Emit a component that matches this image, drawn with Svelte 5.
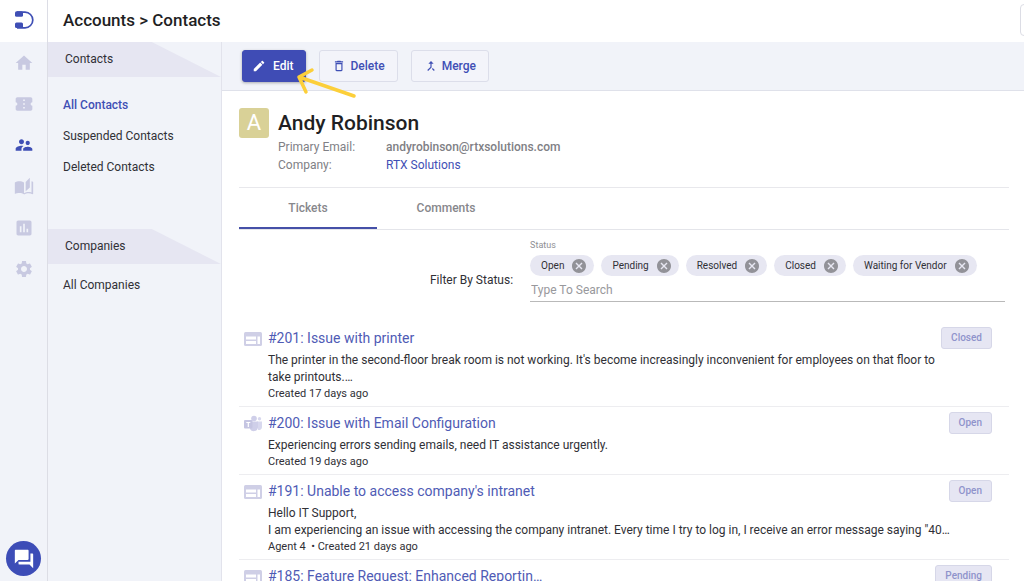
<script>
  const navItems = [
    { name: 'Home', paths: ['M10 20v-6h4v6h5v-8h3L12 3 2 12h3v8z'] },
    {
      name: 'Tickets',
      paths: [
        'M22 10V6c0-1.100-.9-2-2-2H4c-1.100 0-2 .9-2 2v4c1.100 0 2 .9 2 2s-.9 2-2 2v4c0 1.100.9 2 2 2h16c1.100 0 2-.9 2-2v-4c-1.100 0-2-.9-2-2s.9-2 2-2zm-9 7.500h-2v-2h2v2zm0-4.500h-2v-2h2v2zm0-4.500h-2v-2h2v2z'
      ]
    },
    {
      name: 'Accounts',
      active: true,
      paths: [
        'M16.500 12c1.380 0 2.490-1.120 2.490-2.500S17.880 7 16.500 7 14 8.120 14 9.500s1.120 2.500 2.500 2.500zM9 11c1.660 0 2.990-1.340 2.990-3S10.660 5 9 5 6 6.340 6 8s1.340 3 3 3zm7.500 3c-1.830 0-5.500.92-5.500 2.750V19h11v-2.250c0-1.830-3.670-2.750-5.500-2.750zM9 13c-2.330 0-7 1.170-7 3.500V19h7v-2.250c0-.85.33-2.340 2.370-3.470C10.500 13.100 9.660 13 9 13z'
      ]
    },
    {
      name: 'Knowledge base',
      paths: [
        'M12 6.500C10.500 5.400 8.500 5 6.500 5S2.500 5.400 1 6.500v14c1.500-.9 3.500-1.300 5.500-1.300s4 .4 5.500 1.500z',
        'M19 1l-5 5v11l5-4.500zM21 5v13.500c-1.100-.35-2.300-.5-3.500-.5-1.700 0-4.150.65-5.500 1.500v1.500c1.500-1 3.800-1.500 5.500-1.500 1.650 0 3.350.3 4.750 1.050.3.100.75-.15.75-.5V6c-.6-.45-1.250-.75-2-1z'
      ]
    },
    {
      name: 'Reports',
      paths: [
        'M19 3H5c-1.100 0-2 .9-2 2v14c0 1.100.9 2 2 2h14c1.100 0 2-.9 2-2V5c0-1.100-.9-2-2-2zM9 17H7v-7h2v7zm4 0h-2V7h2v10zm4 0h-2v-4h2v4z'
      ]
    },
    {
      name: 'Settings',
      paths: [
        'M19.140 12.940c.04-.3.060-.61.060-.94 0-.32-.02-.64-.07-.94l2.030-1.580c.18-.14.23-.41.120-.61l-1.920-3.320c-.12-.22-.37-.29-.59-.22l-2.390.96c-.5-.38-1.030-.7-1.620-.94l-.36-2.540c-.04-.24-.24-.41-.48-.41h-3.840c-.24 0-.43.170-.47.410l-.36 2.540c-.59.240-1.130.570-1.620.940l-2.390-.96c-.22-.08-.47 0-.59.220L2.740 8.870c-.12.210-.08.470.120.610l2.030 1.580c-.05.300-.09.630-.09.940s.020.640.070.940l-2.030 1.580c-.18.140-.23.410-.12.610l1.920 3.320c.120.220.370.290.590.220l2.390-.96c.5.380 1.030.7 1.620.940l.36 2.540c.05.240.240.410.480.410h3.840c.240 0 .440-.17.470-.41l.36-2.540c.59-.24 1.130-.56 1.620-.94l2.390.96c.220.080.470 0 .59-.22l1.920-3.320c.120-.22.070-.47-.12-.61l-2.010-1.580zM12 15.600c-1.980 0-3.600-1.620-3.600-3.600s1.620-3.600 3.600-3.600 3.600 1.620 3.600 3.600-1.620 3.600-3.600 3.600z'
      ]
    }
  ];

  const contactLinks = ['All Contacts', 'Suspended Contacts', 'Deleted Contacts'];

  let activeTab = $state('Tickets');
  let statuses = $state(['Open', 'Pending', 'Resolved', 'Closed', 'Waiting for Vendor']);
  let search = $state('');

  const tickets = [
    {
      title: '#201: Issue with printer',
      source: 'web',
      status: 'Closed',
      text: "The printer in the second-floor break room is not working. It's become increasingly inconvenient for employees on that floor to take printouts.…",
      meta: 'Created 17 days ago'
    },
    {
      title: '#200: Issue with Email Configuration',
      source: 'teams',
      status: 'Open',
      text: 'Experiencing errors sending emails, need IT assistance urgently.',
      meta: 'Created 19 days ago'
    },
    {
      title: "#191: Unable to access company's intranet",
      source: 'web',
      status: 'Open',
      text: 'Hello IT Support,\nI am experiencing an issue with accessing the company intranet. Every time I try to log in, I receive an error message saying "40…',
      meta: 'Agent 4  • Created 21 days ago'
    },
    {
      title: '#185: Feature Request: Enhanced Reportin…',
      source: 'web',
      status: 'Pending',
      text: '',
      meta: ''
    }
  ];

  function removeStatus(status) {
    statuses = statuses.filter((s) => s !== status);
  }
</script>

<div class="app">
  <aside class="rail">
    <a class="logo" href="#home" aria-label="Dashboard">
      <svg width="20" height="20" viewBox="0 0 20 20">
        <path d="M3 2.200h8a7.600 7.600 0 0 1 0 15.600H3" fill="none" stroke="#3f4fb5" stroke-width="1.700" />
        <rect x="1" y="1.300" width="8" height="5.400" rx="1.500" fill="#3f4fb5" />
        <rect x="1" y="12.600" width="8" height="5.400" rx="1.500" fill="#3f4fb5" />
      </svg>
    </a>
    <nav class="rail-nav">
      {#each navItems as item}
        <a href="#nav" class:active={item.active} aria-label={item.name}>
          <svg width="20" height="20" viewBox="0 0 24 24">
            {#each item.paths as d}
              <path {d} />
            {/each}
          </svg>
        </a>
      {/each}
    </nav>
    <button class="chat" aria-label="Open chat">
      <svg width="22" height="22" viewBox="0 0 24 24">
        <path d="M21 6h-2v9H6v2c0 .55.45 1 1 1h11l4 4V7c0-.55-.45-1-1-1zm-4 6V3c0-.55-.45-1-1-1H3c-.55 0-1 .45-1 1v14l4-4h10c.55 0 1-.45 1-1z" />
      </svg>
    </button>
  </aside>

  <div class="page">
    <header class="topbar">
      <h1>Accounts &gt; Contacts</h1>
      <button class="topbar-more" aria-label="More"></button>
    </header>

    <div class="body">
      <nav class="sidebar">
        <h2>Contacts</h2>
        <ul class="contacts">
          {#each contactLinks as link, i}
            <li><a href="#contacts" class:current={i === 0}>{link}</a></li>
          {/each}
        </ul>
        <h2>Companies</h2>
        <ul>
          <li><a href="#companies">All Companies</a></li>
        </ul>
      </nav>

      <main>
        <div class="toolbar">
          <button class="btn primary">
            <svg width="14" height="14" viewBox="0 0 24 24">
              <path d="M3 17.250V21h3.750L17.810 9.940l-3.750-3.750L3 17.250zM20.710 7.040c.39-.39.39-1.020 0-1.410l-2.340-2.340c-.39-.39-1.020-.39-1.410 0l-1.830 1.830 3.750 3.750 1.830-1.830z" />
            </svg>
            Edit
          </button>
          <button class="btn">
            <svg width="14" height="14" viewBox="0 0 24 24">
              <path d="M6 19c0 1.100.9 2 2 2h8c1.100 0 2-.9 2-2V7H6v12zM8 9h8v10H8V9zm7.500-5l-1-1h-5l-1 1H5v2h14V4z" />
            </svg>
            Delete
          </button>
          <button class="btn">
            <svg width="14" height="14" viewBox="0 0 24 24">
              <path d="M17 20.410L18.410 19 15 15.590 13.590 17 17 20.410zM7.500 8H11v5.590L5.590 19 7 20.410l6-6V8h3.500L12 3.500 7.500 8z" />
            </svg>
            Merge
          </button>
          <svg class="pointer" width="64" height="36" viewBox="0 0 64 36">
            <path d="M60 30L5 11M5 11L18 4M5 11L12 26" />
          </svg>
        </div>

        <div class="content">
          <section class="contact">
            <div class="avatar">A</div>
            <div>
              <h3>Andy Robinson</h3>
              <dl>
                <dt>Primary Email:</dt>
                <dd class="email">andyrobinson@rtxsolutions.com</dd>
                <dt>Company:</dt>
                <dd><a href="#company">RTX Solutions</a></dd>
              </dl>
            </div>
          </section>

          <div class="tabs" role="tablist">
            {#each ['Tickets', 'Comments'] as tab}
              <button
                role="tab"
                aria-selected={activeTab === tab}
                class:active={activeTab === tab}
                onclick={() => (activeTab = tab)}>{tab}</button>
            {/each}
          </div>

          <section class="filter">
            <label class="filter-label" for="status-search">Filter By Status:</label>
            <div class="field">
              <span class="field-name">Status</span>
              <div class="chips">
                {#each statuses as status (status)}
                  <span class="chip">
                    {status}
                    <button aria-label="Remove {status}" onclick={() => removeStatus(status)}>
                      <svg width="14" height="14" viewBox="2 2 20 20">
                        <path d="M12 2C6.470 2 2 6.470 2 12s4.470 10 10 10 10-4.470 10-10S17.530 2 12 2zm5 13.590L15.590 17 12 13.410 8.410 17 7 15.590 10.590 12 7 8.410 8.410 7 12 10.590 15.590 7 17 8.410 13.410 12 17 15.590z" />
                      </svg>
                    </button>
                  </span>
                {/each}
              </div>
              <input id="status-search" type="text" placeholder="Type To Search" bind:value={search} />
            </div>
          </section>

          <ul class="tickets">
            {#each tickets as ticket}
              <li>
                {#if ticket.source === 'teams'}
                  <svg class="source" width="18" height="18" viewBox="0 0 18 18">
                    <circle cx="10" cy="3.500" r="2.800" fill="#cfcfe9" />
                    <circle cx="15.500" cy="3.800" r="1.700" fill="#d8d8ee" />
                    <path d="M13 6.500h5v5.500a3 3 0 0 1-4 2.800z" fill="#d8d8ee" />
                    <path d="M6 6.500h8v6a4.300 4.300 0 0 1-8 1.500z" fill="#cfcfe9" />
                    <rect y="5" width="8.500" height="8.500" rx="1" fill="#c5c5e2" />
                    <path d="M2.300 7.500h4M4.300 7.500v4.500" stroke="#fff" stroke-width="1.200" />
                  </svg>
                {:else}
                  <svg class="source" width="18" height="18" viewBox="0 0 18 18">
                    <rect y="2" width="18" height="14" rx="1.500" fill="#cfcfe6" />
                    <path d="M2 6.500h10v3H2zM2 11h10v3H2zM13.500 6.500H16V14h-2.500z" fill="#fff" />
                  </svg>
                {/if}
                <div class="ticket">
                  <div class="ticket-head">
                    <a href="#ticket">{ticket.title}</a>
                    <span class="status">{ticket.status}</span>
                  </div>
                  <p class="text">{ticket.text}</p>
                  <p class="meta">{ticket.meta}</p>
                </div>
              </li>
            {/each}
          </ul>
        </div>
      </main>
    </div>
  </div>
</div>

<style>
  :global(body) {
    font-family: Roboto, 'Liberation Sans', sans-serif;
    font-size: 12px;
    color: #303036;
    background: #fff;
  }
  .app {
    display: flex;
    height: 100vh;
    overflow: hidden;
  }
  h1, h2, h3, p, ul, dl, dd {
    margin: 0;
    padding: 0;
  }
  ul {
    list-style: none;
  }
  a {
    color: #3f4fb5;
    text-decoration: none;
  }
  button {
    font-family: inherit;
    cursor: pointer;
  }
  svg {
    display: block;
  }

  .rail {
    display: flex;
    flex-direction: column;
    align-items: center;
    width: 47px;
    flex-shrink: 0;
    background: #f1f3f9;
    border-right: 1px solid #dcdde5;
  }
  .logo {
    display: flex;
    align-items: center;
    justify-content: center;
    box-sizing: border-box;
    width: 100%;
    height: 42px;
    padding-bottom: 2px;
    background: #fff;
  }
  .rail-nav {
    display: flex;
    flex-direction: column;
    height: 248px;
  }
  .rail-nav a {
    display: flex;
    align-items: center;
    flex: 1;
  }
  .rail-nav svg {
    fill: #c8c9e1;
  }
  .rail-nav .active svg {
    fill: #3f4fb5;
  }
  .chat {
    display: flex;
    align-items: center;
    justify-content: center;
    width: 35px;
    height: 35px;
    margin-top: auto;
    margin-bottom: 5px;
    padding: 0;
    border: 0;
    border-radius: 50%;
    background: #3d4db7;
  }
  .chat svg {
    fill: #fff;
  }

  .page {
    display: flex;
    flex-direction: column;
    flex: 1;
    min-width: 0;
  }
  .topbar {
    display: flex;
    align-items: center;
    justify-content: space-between;
    box-sizing: border-box;
    height: 42px;
    flex-shrink: 0;
    padding: 0 0 2px 15px;
    overflow: hidden;
  }
  h1 {
    font-size: 17px;
    font-weight: 500;
    color: #1f1f24;
  }
  .topbar-more {
    width: 36px;
    height: 32px;
    margin-right: -32px;
    border: 1px solid #dcdde5;
    border-radius: 4px;
    background: #fff;
  }
  .body {
    display: flex;
    flex: 1;
    min-height: 0;
  }

  .sidebar {
    width: 173px;
    flex-shrink: 0;
    background: #f1f3f9;
    border-right: 1px solid #e2e3ec;
  }
  .sidebar h2 {
    padding-left: 17px;
    font-size: 12px;
    font-weight: 400;
    line-height: 35px;
    background: #e6e6f2;
    clip-path: polygon(0 0, 60% 0, 100% 100%, 0 100%);
  }
  .sidebar ul {
    padding: 6px 15px 0;
  }
  .sidebar .contacts {
    padding: 13px 15px 46px;
  }
  .sidebar li {
    line-height: 31px;
  }
  .sidebar a {
    color: #303036;
  }
  .sidebar .current {
    font-weight: 500;
    color: #3f4fb5;
  }

  main {
    flex: 1;
    min-width: 0;
    overflow: hidden;
  }
  .toolbar {
    position: relative;
    display: flex;
    align-items: center;
    gap: 13px;
    height: 48px;
    padding-left: 20px;
    background: #f1f3f9;
    border-bottom: 1px solid #dfe1ea;
  }
  .btn {
    display: flex;
    align-items: center;
    gap: 4px;
    height: 32px;
    padding: 0 12px;
    font-size: 12px;
    font-weight: 500;
    color: #3f4fb5;
    background: #f3f4fa;
    border: 1px solid #dcdeea;
    border-radius: 3px;
  }
  .btn svg {
    fill: currentColor;
  }
  .btn.primary {
    gap: 7px;
    padding: 0 12px 0 9px;
    color: #fff;
    background: #3f4cb5;
    border-color: #3f4cb5;
    box-shadow: 0 1px 3px rgba(0, 0, 0, 0.3);
  }
  .pointer {
    position: absolute;
    top: 24px;
    left: 72px;
    z-index: 1;
    pointer-events: none;
  }
  .pointer path {
    fill: none;
    stroke: #fccf3a;
    stroke-width: 3.500;
    stroke-linecap: round;
  }

  .content {
    padding: 0 15px 0 17px;
  }
  .contact {
    display: flex;
    gap: 9px;
    padding: 17px 0 13px;
    border-bottom: 1px solid #e8e8ec;
  }
  .avatar {
    width: 30px;
    height: 30px;
    border-radius: 3px;
    font-size: 22px;
    line-height: 30px;
    text-align: center;
    color: #fff;
    background: #d9d197;
  }
  h3 {
    font-size: 21px;
    font-weight: 500;
    line-height: 30px;
    color: #1f1f24;
  }
  dl {
    display: grid;
    grid-template-columns: 108px auto;
    line-height: 18px;
    color: #808085;
  }
  .email {
    font-weight: 500;
  }

  .tabs {
    display: flex;
    border-bottom: 1px solid #e4e5ea;
  }
  .tabs button {
    width: 138px;
    height: 41px;
    padding: 0;
    font-size: 12px;
    font-weight: 500;
    color: #87878c;
    background: none;
    border: 0;
    border-bottom: 2px solid transparent;
  }
  .tabs .active {
    border-bottom-color: #4550a8;
  }

  .filter {
    display: flex;
    align-items: center;
    justify-content: flex-end;
    gap: 17px;
    padding: 9px 4px 20px 0;
  }
  .filter-label {
    padding-top: 18px;
  }
  .field {
    display: flex;
    flex-direction: column;
    width: 62%;
    border-bottom: 1px solid #b9b9b9;
  }
  .field-name {
    font-size: 9px;
    line-height: 12px;
    color: #8f8f94;
  }
  .chips {
    display: flex;
    gap: 7px;
    padding: 4px 0 2px;
  }
  .chip {
    display: flex;
    align-items: center;
    gap: 8px;
    height: 21px;
    padding: 0 8px 0 11px;
    font-size: 10px;
    white-space: nowrap;
    background: #e7e7f2;
    border-radius: 11px;
  }
  .chip button {
    padding: 0;
    border: 0;
    background: none;
  }
  .chip svg {
    fill: #929298;
  }
  .field input {
    height: 23px;
    padding: 0 1px;
    font: inherit;
    color: inherit;
    background: none;
    border: 0;
    outline: none;
  }
  .field input::placeholder {
    color: #98989c;
  }

  .tickets li {
    display: flex;
    gap: 6px;
    padding: 7px 17px 4px 5px;
    border-bottom: 1px solid #ededf0;
  }
  .source {
    flex-shrink: 0;
    margin-top: 1px;
  }
  .ticket {
    flex: 1;
    min-width: 0;
  }
  .ticket-head {
    display: flex;
    justify-content: space-between;
    height: 18px;
    margin-bottom: 5px;
  }
  .ticket-head a {
    font-size: 14px;
    line-height: 18px;
    color: #4f5bb5;
  }
  .status {
    box-sizing: border-box;
    height: 22px;
    margin-top: -2px;
    padding: 0 9px;
    font-size: 10px;
    font-weight: 500;
    line-height: 20px;
    color: #8f93cb;
    background: #e6e6f3;
    border: 1px solid #d6d7e8;
    border-radius: 3px;
  }
  .text {
    margin-right: 32px;
    line-height: 17px;
    white-space: pre-line;
  }
  .meta {
    font-size: 11px;
    line-height: 16px;
    white-space: pre-wrap;
  }
</style>
